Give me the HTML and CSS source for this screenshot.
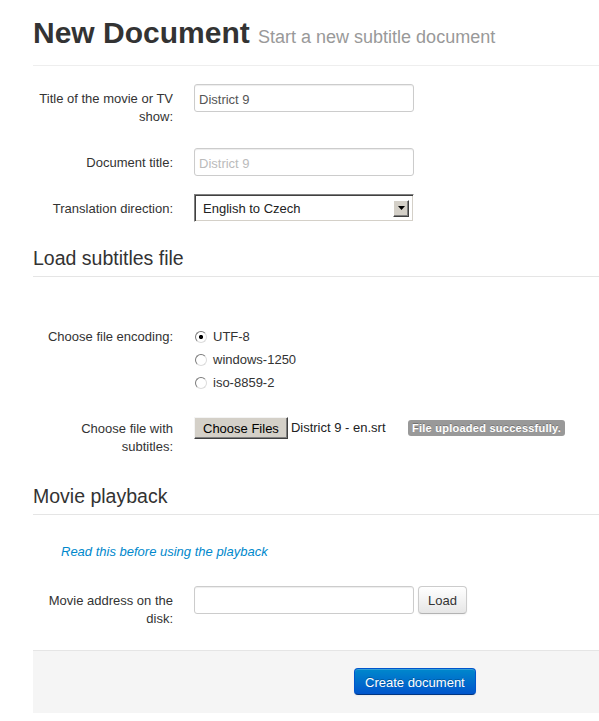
FILE: index.html
```html
<!DOCTYPE html>
<html lang="en">
<head>
<meta charset="utf-8">
<title>New Document</title>
<link rel="stylesheet" href="styles.css">
</head>
<body>
<div class="page">
  <div class="page-header">
    <h1 class="page-title">New Document <small class="page-subtitle">Start a new subtitle document</small></h1>
  </div>

  <form class="form">
    <div class="group">
      <label class="label" for="movie">Title of the movie or TV show:</label>
      <div class="controls">
        <input class="input" id="movie" type="text" value="District 9">
      </div>
    </div>

    <div class="group">
      <label class="label" for="doctitle">Document title:</label>
      <div class="controls">
        <input class="input" id="doctitle" type="text" placeholder="District 9">
      </div>
    </div>

    <div class="group">
      <label class="label" for="direction">Translation direction:</label>
      <div class="controls">
        <div class="select">
          <select class="select-field" id="direction">
            <option>English to Czech</option>
            <option>Czech to English</option>
          </select>
          <span class="select-arrow"><svg width="7" height="4" viewBox="0 0 7 4"><path d="M0 0H7L3.5 4Z" fill="#000"/></svg></span>
        </div>
      </div>
    </div>

    <div class="legend legend-first">Load subtitles file</div>

    <div class="group">
      <span class="label">Choose file encoding:</span>
      <div class="controls radios">
        <label class="radio"><input class="radio-input" type="radio" name="enc" checked><span>UTF-8</span></label>
        <label class="radio"><input class="radio-input" type="radio" name="enc"><span>windows-1250</span></label>
        <label class="radio"><input class="radio-input" type="radio" name="enc"><span>iso-8859-2</span></label>
      </div>
    </div>

    <div class="group">
      <span class="label">Choose file with subtitles:</span>
      <div class="controls file-row">
        <div class="file">
          <span class="file-button">Choose Files</span>
          <span class="file-name">District 9 - en.srt</span>
        </div>
        <span class="badge">File uploaded successfully.</span>
      </div>
    </div>

    <div class="legend">Movie playback</div>

    <p class="help"><a class="link" href="#">Read this before using the playback</a></p>

    <div class="group">
      <label class="label" for="address">Movie address on the disk:</label>
      <div class="controls inline">
        <input class="input" id="address" type="text">
        <button class="btn" type="button">Load</button>
      </div>
    </div>

    <div class="actions">
      <button class="btn btn-primary" type="submit">Create document</button>
    </div>
  </form>
</div>
</body>
</html>
```

FILE: styles.css
```css
html, body {
  margin: 0;
  background: #fff;
}

body {
  font-family: "Liberation Sans", Arial, sans-serif;
  font-size: 13px;
  line-height: 18px;
  color: #333;
}

.page {
  margin-left: 33px;
}

.page-header {
  padding-top: 15px;
  padding-bottom: 14px;
  border-bottom: 1px solid #eee;
}

.page-title {
  margin: 0;
  font-size: 30px;
  line-height: 36px;
  font-weight: bold;
  color: #333;
}

.page-subtitle {
  font-size: 18px;
  line-height: 1;
  font-weight: normal;
  color: #999;
}

.form {
  margin: 18px 0 0;
}

.group {
  display: flex;
  align-items: flex-start;
  margin-bottom: 18px;
}

.label {
  flex: none;
  width: 140px;
  padding: 6px 0 4px;
  text-align: right;
  color: #333;
}

.controls {
  margin-left: 21px;
}

.input {
  box-sizing: border-box;
  display: block;
  width: 220px;
  height: 28px;
  margin: 0;
  padding: 5px 4px 3px;
  border: 1px solid #ccc;
  border-radius: 3px;
  box-shadow: inset 0 1px 1px rgba(0, 0, 0, 0.075);
  font: inherit;
  color: #555;
  background: #fff;
}

.input::placeholder {
  color: #bbb;
}

.select {
  box-sizing: border-box;
  display: flex;
  align-items: center;
  width: 220px;
  height: 28px;
  border: 1px solid;
  border-color: #808080 #fff #fff #808080;
  box-shadow: inset 1px 1px 0 #404040, inset -1px -1px 0 #d4d0c8;
  background: #fff;
}

.select-field {
  flex: 1;
  min-width: 0;
  height: 100%;
  margin: 0;
  padding: 2px 0 0 8px;
  border: 0;
  background: transparent;
  font: inherit;
  color: #222;
  appearance: none;
  -webkit-appearance: none;
  outline: none;
}

.select-arrow {
  box-sizing: border-box;
  flex: none;
  display: flex;
  align-items: center;
  justify-content: center;
  width: 16px;
  height: 17px;
  margin-right: 4px;
  border: 1px solid;
  border-color: #fff #404040 #404040 #fff;
  box-shadow: inset -1px -1px 0 #808080;
  background: #d4d0c8;
}

.legend {
  font-size: 19.5px;
  line-height: 36px;
  color: #333;
  border-bottom: 1px solid #e5e5e5;
  margin-bottom: 27px;
}

.legend-first {
  margin-bottom: 45px;
}

.radios {
  display: flex;
  flex-direction: column;
  gap: 5px;
  padding: 6px 0 4px;
}

.radio {
  display: flex;
  align-items: center;
  height: 18px;
}

.radio-input {
  box-sizing: border-box;
  appearance: none;
  -webkit-appearance: none;
  width: 12px;
  height: 12px;
  margin: 0 6px 0 1px;
  border: 1px solid;
  border-color: #7a7a7a #dcdcdc #dcdcdc #7a7a7a;
  border-radius: 50%;
  background: #fff;
}

.radio-input:checked {
  background: radial-gradient(circle, #000 0 1.8px, #fff 2.4px);
}

.file-row {
  display: flex;
  align-items: center;
  padding-top: 3px;
}

.file {
  display: flex;
  align-items: center;
  width: 214px;
}

.file-button {
  box-sizing: border-box;
  display: flex;
  align-items: center;
  height: 22px;
  padding: 1px 8px 0;
  border: 1px solid;
  border-color: #f4f4f4 #404040 #404040 #f4f4f4;
  box-shadow: inset -1px -1px 0 #808080;
  background: #d4d0c8;
  color: #000;
}

.file-name {
  margin-left: 3px;
  color: #222;
}

.badge {
  padding: 1px 4px;
  border-radius: 3px;
  background: #999;
  color: #fff;
  font-size: 11px;
  line-height: 14px;
  font-weight: bold;
  letter-spacing: 0.25px;
  text-shadow: 0 -1px 0 rgba(0, 0, 0, 0.25);
}

.help {
  margin: 0 0 25px;
  padding: 1px 0 0 28px;
}

.link {
  color: #08c;
  font-style: italic;
  text-decoration: none;
}

.inline {
  display: flex;
  align-items: flex-start;
}

.btn {
  box-sizing: border-box;
  height: 28px;
  margin: 0 0 0 4px;
  padding: 2px 9px 0;
  border: 1px solid #ccc;
  border-bottom-color: #b3b3b3;
  border-radius: 4px;
  background: linear-gradient(#fff, #e6e6e6);
  box-shadow: inset 0 1px 0 rgba(255, 255, 255, 0.2), 0 1px 2px rgba(0, 0, 0, 0.05);
  font: inherit;
  color: #333;
}

.actions {
  background: #f5f5f5;
  border-top: 1px solid #e5e5e5;
  padding: 17px 0 18px 321px;
}

.btn-primary {
  height: 27px;
  margin: 0;
  padding: 2px 10px 0;
  border-color: #0055cc #0055cc #003580;
  background: linear-gradient(#0088cc, #0055cc);
  color: #fff;
  text-shadow: 0 -1px 0 rgba(0, 0, 0, 0.25);
}
```
